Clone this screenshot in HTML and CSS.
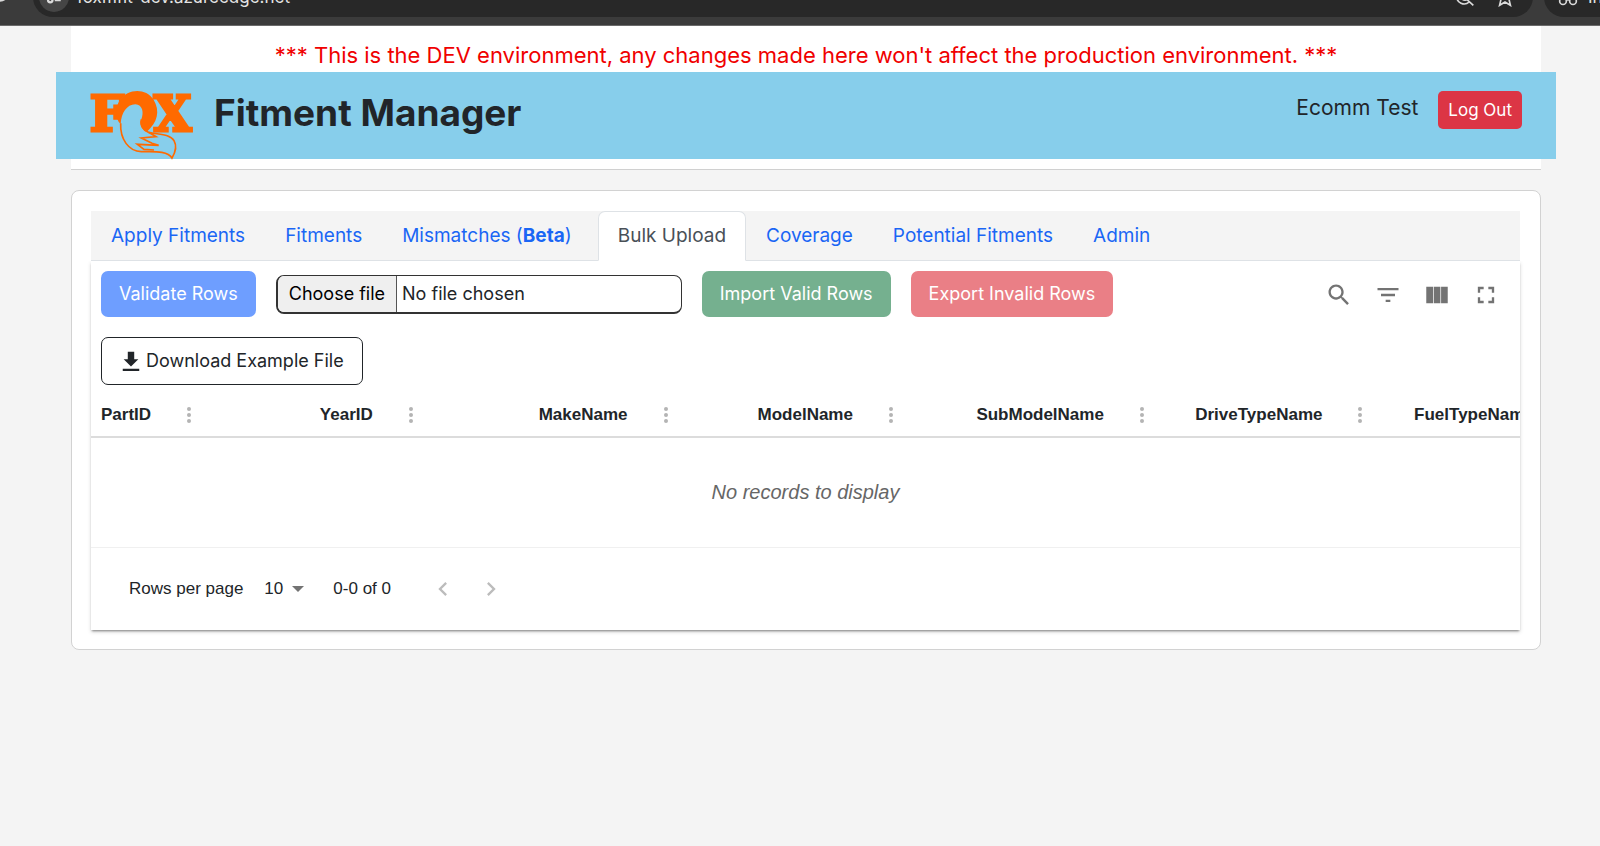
FILE: index.html
```html
<!DOCTYPE html>
<html lang="en">
<head>
<meta charset="utf-8">
<title>Fitment Manager</title>
<link rel="stylesheet" href="styles.css">
</head>
<body>
<div class="browser">
  <svg class="browser-reload" viewBox="0 0 20 20"><circle cx="10" cy="10" r="7"/></svg>
  <div class="address">
    <span class="site-info"><svg viewBox="0 0 24 24"><path d="M3 8h8M13 16h8"/><circle cx="17" cy="8" r="3"/><circle cx="7" cy="16" r="3"/></svg></span>
    <span class="url">foxmfit-dev.azureedge.net</span>
    <svg class="address-icon" viewBox="0 0 24 24"><path d="M2 11a9 9 0 0 0 15 7M2 4l20 18M8 14c3 3 8 2 10-2"/></svg>
    <svg class="address-icon" viewBox="0 0 24 24"><path d="M12 2l3 7 7 .6-5.300 4.800L18.500 22 12 18l-6.500 4 1.800-7.600L2 9.600 9 9z"/></svg>
  </div>
  <div class="incognito">
    <svg class="address-icon" viewBox="0 0 24 24"><circle cx="6" cy="17" r="4"/><circle cx="18" cy="17" r="4"/><path d="M10 16q2-1.500 4 0M2 10h20"/></svg>
    <span>Incognito</span>
  </div>
</div>

<header class="top">
  <p class="env-warning">*** This is the DEV environment, any changes made here won't affect the production environment. ***</p>
  <div class="brand-bar">
    <svg class="logo" viewBox="30 30 306 210" role="img" aria-label="Fox">
      <g class="logo-letters">
        <text x="29" y="153">F</text>
        <text x="221" y="153">X</text>
      </g>
      <path class="logo-gap" d="M126 134C110 118 106 84 122 60C146 26 196 26 218 60C238 94 230 126 200 154Z"/>
      <path class="logo-solid" d="M122 132C105 118 104 82 120 60C144 24 198 24 220 58C242 94 232 128 200 156C184 146 178 134 184 118C192 98 188 74 166 73C140 74 124 98 122 132Z"/>
      <path class="logo-line" d="M122 130C120 178 146 214 184 215C214 216 262 210 276 234C288 214 290 196 282 182C270 162 238 164 206 157C190 152 180 136 184 118"/>
      <path class="logo-line" d="M206 157L228 170L184 174L216 190L236 196L172 193L192 208L222 210"/>
    </svg>
    <h1 class="app-title">Fitment Manager</h1>
    <span class="user-name">Ecomm Test</span>
    <button class="btn logout" type="button">Log Out</button>
  </div>
</header>

<main class="card">
  <nav class="tabs">
    <a class="tab" href="#apply">Apply Fitments</a>
    <a class="tab" href="#fitments">Fitments</a>
    <a class="tab" href="#mismatches">Mismatches (<b>Beta</b>)</a>
    <a class="tab active" href="#bulk" aria-current="page">Bulk Upload</a>
    <a class="tab" href="#coverage">Coverage</a>
    <a class="tab" href="#potential">Potential Fitments</a>
    <a class="tab" href="#admin">Admin</a>
  </nav>
  <section class="paper">
    <div class="toolbar">
      <div class="actions">
        <button class="btn validate" type="button" disabled>Validate Rows</button>
        <div class="file-field">
          <input class="file-input" id="rows-file" type="file">
          <label class="file-label" for="rows-file"><span class="file-button">Choose file</span><span class="file-name">No file chosen</span></label>
        </div>
        <button class="btn import" type="button" disabled>Import Valid Rows</button>
        <button class="btn export" type="button" disabled>Export Invalid Rows</button>
        <button class="btn download" type="button"><svg viewBox="0 0 24 24"><path d="M8.500 2h7v8H20l-8 8-8-8h4.500zM3 20.500h18V23H3z"/></svg>Download Example File</button>
      </div>
      <div class="tools">
        <button class="tool" type="button" aria-label="Search"><svg viewBox="0 0 24 24"><path d="M15.500 14h-.790l-.280-.270C15.410 12.590 16 11.110 16 9.500 16 5.910 13.090 3 9.500 3S3 5.910 3 9.500 5.910 16 9.500 16c1.610 0 3.090-.590 4.230-1.570l.270.280v.790l5 4.990L20.490 19l-4.990-5zm-6 0C7.010 14 5 11.990 5 9.500S7.010 5 9.500 5 14 7.010 14 9.500 11.990 14 9.500 14z"/></svg></button>
        <button class="tool" type="button" aria-label="Filters"><svg viewBox="0 0 24 24"><path d="M10 18h4v-2h-4v2zM3 6v2h18V6H3zm3 7h12v-2H6v2z"/></svg></button>
        <button class="tool" type="button" aria-label="Columns"><svg viewBox="0 0 24 24"><path d="M8.600 19H2.800V5h5.800zM14.900 19H9.200V5h5.700zM21.200 19h-5.700V5h5.700z"/></svg></button>
        <button class="tool" type="button" aria-label="Full screen"><svg viewBox="0 0 24 24"><path d="M7 14H5v5h5v-2H7v-3zm-2-4h2V7h3V5H5v5zm12 7h-3v2h5v-5h-2v3zM14 5v2h3v3h2V5h-5z"/></svg></button>
      </div>
    </div>
    <div class="table-wrap">
      <table class="grid">
        <thead>
          <tr>
            <th><span class="head">PartID<button class="dots" type="button" aria-label="PartID menu"><i></i><i></i><i></i></button></span></th>
            <th><span class="head">YearID<button class="dots" type="button" aria-label="YearID menu"><i></i><i></i><i></i></button></span></th>
            <th><span class="head">MakeName<button class="dots" type="button" aria-label="MakeName menu"><i></i><i></i><i></i></button></span></th>
            <th><span class="head">ModelName<button class="dots" type="button" aria-label="ModelName menu"><i></i><i></i><i></i></button></span></th>
            <th><span class="head">SubModelName<button class="dots" type="button" aria-label="SubModelName menu"><i></i><i></i><i></i></button></span></th>
            <th><span class="head">DriveTypeName<button class="dots" type="button" aria-label="DriveTypeName menu"><i></i><i></i><i></i></button></span></th>
            <th><span class="head">FuelTypeName</span></th>
          </tr>
        </thead>
      </table>
      <p class="empty">No records to display</p>
    </div>
    <footer class="pager">
      <label for="page-size">Rows per page</label>
      <div class="select-wrap">
        <select class="page-size" id="page-size"><option>10</option><option>25</option></select>
        <svg viewBox="0 0 12 6"><path d="M0 0h12L6 6z"/></svg>
      </div>
      <span class="range">0-0 of 0</span>
      <button class="page-nav" type="button" aria-label="Previous page" disabled><svg viewBox="0 0 24 24"><path d="M15.400 7.400 14 6l-6 6 6 6 1.400-1.400L10.800 12z"/></svg></button>
      <button class="page-nav" type="button" aria-label="Next page" disabled><svg viewBox="0 0 24 24"><path d="M10 6 8.600 7.400l4.600 4.600-4.600 4.600L10 18l6-6z"/></svg></button>
    </footer>
  </section>
</main>
</body>
</html>
```
FILE: styles.css
```css
* { box-sizing: border-box; }
body {
  margin: 0;
  background: #f4f4f4;
  color: #212529;
  font: 19px/30px Inter, "Liberation Sans", sans-serif;
}
button, select { font: inherit; color: inherit; }
svg { flex: none; }

/* Browser strip */
.browser {
  display: flex;
  align-items: flex-start;
  gap: 11px;
  height: 26px;
  overflow: hidden;
  background: #3b3b3b;
  border-bottom: 1px solid #6a6a6a;
  color: #e4e4e4;
  font-size: 17px;
}
.browser svg { fill: none; stroke: #dadada; stroke-width: 2; }
.browser-reload { width: 22px; height: 22px; margin: -18px 11px 0 -11px; }
.address, .incognito {
  display: flex;
  align-items: center;
  height: 40px;
  margin-top: -23px;
  background: #282828;
}
.address { flex: 1; gap: 20px; padding: 0 18px 0 6px; border-radius: 20px; }
.site-info {
  display: flex;
  align-items: center;
  justify-content: center;
  width: 30px;
  height: 30px;
  border-radius: 50%;
  background: #454545;
}
.browser .site-info svg { width: 18px; height: 18px; stroke-width: 3; }
.url { flex: 1; margin-left: -12px; }
.address-icon { width: 20px; height: 20px; }
.incognito { flex: none; gap: 10px; width: 56px; padding-left: 14px; border-radius: 20px 0 0 20px; }

/* Header */
.top {
  margin: 0 59px 0 71px;
  padding: 14px 0 10px;
  background: #fff;
  border-bottom: 1px solid #d0d0d0;
}
.env-warning { margin: 0 0 2px; text-align: center; color: #f00000; font-size: 22px; }
.brand-bar {
  display: flex;
  align-items: flex-start;
  margin: 0 -15px;
  padding: 18px 34px 0;
  height: 87px;
  background: #87ceeb;
}
.logo { width: 102px; height: 70px; overflow: visible; }
.logo-letters { font: bold 146px "DejaVu Serif", serif; fill: #ff6a00; stroke: #ff6a00; stroke-width: 9; }
.logo-gap { fill: #87ceeb; }
.logo-solid { fill: #ff6a00; }
.logo-line { fill: none; stroke: #ff6a00; stroke-width: 5; }
.app-title { flex: 1; margin: 0 0 0 22px; font-size: 37px; line-height: 46px; font-weight: 700; }
.user-name { margin: 3px 20px 0 0; font-size: 21px; }
.btn { border: 0; border-radius: 7px; color: #fff; white-space: nowrap; }
.logout { height: 38px; margin-top: 1px; padding: 0 10px; border-radius: 5px; background: #dc3545; font-size: 17px; }

/* Tabs */
.card {
  margin: 20px 59px 0 71px;
  padding: 20px 20px 19px 19px;
  background: #fff;
  border: 1px solid #d2d2d2;
  border-radius: 8px;
}
.tabs { display: flex; background: #f4f4f4; border-bottom: 1px solid #dee2e6; }
.tab {
  margin-bottom: -1px;
  padding: 9px 19px;
  border: 1px solid transparent;
  border-radius: 7px 7px 0 0;
  color: #1a66f5;
  line-height: 30px;
  text-decoration: none;
  white-space: nowrap;
}
.tab.active { margin-left: 6px; color: #495057; background: #fff; border-color: #dee2e6 #dee2e6 #fff; }

/* Toolbar */
.paper { background: #fff; box-shadow: 0 2px 2px -1px rgba(0,0,0,.4), 0 2px 4px rgba(0,0,0,.16); clip-path: inset(0 -10px -10px -10px); }
.toolbar { display: flex; justify-content: space-between; padding: 10px 10px 9px; font-size: 18px; }
.actions { display: flex; flex-wrap: wrap; align-items: center; gap: 20px; }
.actions .btn { height: 46px; padding: 0 18px; }
.validate { background: #6e9eff; }
.import { background: #75b08f; }
.export { background: #ea7f86; }
.actions .download {
  display: flex;
  align-items: center;
  gap: 4px;
  height: 48px;
  padding: 0 18px;
  border: 1px solid #212529;
  background: #fff;
  color: #212529;
}
.download svg { width: 22px; height: 22px; fill: #212529; }
.file-field { position: relative; width: 406px; }
.file-input { position: absolute; inset: 0; width: 100%; opacity: 0; }
.file-label {
  display: flex;
  align-items: center;
  height: 39px;
  border: 2px solid #333;
  border-width: 1px 1px 2px 2px;
  border-radius: 8px;
  overflow: hidden;
}
.file-button { padding: 3px 11px; border-right: 1px solid #555; background: #efefef; color: #000; line-height: 32px; }
.file-name { padding-left: 5px; }
.tools { display: flex; gap: 1px; }
.tool { display: flex; align-items: center; justify-content: center; width: 48px; height: 48px; padding: 0; border: 0; background: none; }
.tool svg { width: 28px; height: 28px; fill: #737373; }

/* Table */
.table-wrap { overflow: hidden; border-bottom: 1px solid #f0f0f0; font-family: "Liberation Sans", sans-serif; }
.grid { width: 1532px; table-layout: fixed; border-collapse: collapse; }
.grid th { height: 43px; padding: 0 10px; text-align: left; font-size: 17px; border-bottom: 2px solid #dcdcdc; }
.head { display: flex; align-items: center; }
.dots { display: flex; flex-direction: column; gap: 2px; margin-left: 36px; padding: 0; border: 0; background: none; }
.dots i { width: 4px; height: 4px; border-radius: 50%; background: #b4b4b4; }
.empty { margin: 0; padding: 39px 0 40px; text-align: center; font-style: italic; font-size: 20px; color: #666; }

/* Pagination */
.pager { display: flex; align-items: center; height: 82px; padding-left: 38px; font: 17px/30px "Liberation Sans", sans-serif; }
.select-wrap { position: relative; margin-left: 21px; }
.page-size { width: 40px; padding: 0; border: 0; background: none; appearance: none; }
.select-wrap svg { position: absolute; right: 0; top: 12px; width: 12px; height: 6px; fill: #737373; pointer-events: none; }
.range { margin: 0 28px 0 29px; }
.page-nav { display: flex; justify-content: center; width: 48px; padding: 0; border: 0; background: none; }
.page-nav svg { width: 28px; height: 28px; fill: #bcbcbc; }
```
